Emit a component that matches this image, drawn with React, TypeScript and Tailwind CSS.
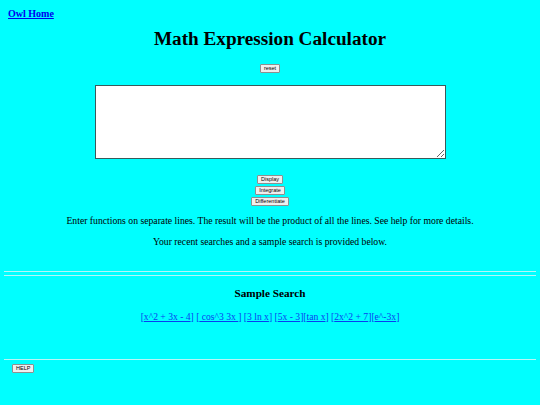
const links = ["x^2 + 3x - 4", " cos^3 3x ", "3 ln x", "5x - 3", "tan x", "2x^2 + 7", "e^-3x"];
const seps = [" ", " ", " ", "", " ", "", ""];

function SmallButton({ label }: { label: string }) {
  return (
    <button className="h-[9px] px-[3px] bg-[#efefef] border border-[#8f8f8f] rounded-[1px] text-[5.5px] leading-none text-black font-['Liberation_Sans',sans-serif]">
      {label}
    </button>
  );
}

export default function App() {
  return (
    <div className="min-h-[405px] w-full bg-[#00ffff] font-['Liberation_Serif',serif] text-black px-[4px]">
      <div className="pt-[8px] pl-[4px] h-[20px] text-[10px] leading-[12px]">
        <a href="#" className="font-bold text-[#0000ee] underline">Owl Home</a>
      </div>
      <h1 className="mt-[7px] text-center text-[19.2px] leading-[24px] font-bold">Math Expression Calculator</h1>
      <div className="mt-[13px] flex justify-center">
        <SmallButton label="reset" />
      </div>
      <div className="mt-[12px] flex justify-center">
        <textarea className="w-[351px] h-[74px] bg-white border border-[#3a5a5a] outline-none resize-y" />
      </div>
      <div className="mt-[16px] flex flex-col items-center gap-[2px]">
        <SmallButton label="Display" />
        <SmallButton label="Integrate" />
        <SmallButton label="Differentiate" />
      </div>
      <p className="mt-[8px] text-center text-[9.7px] leading-[13px]">
        Enter functions on separate lines. The result will be the product of all the lines. See help for more details.
      </p>
      <p className="mt-[8px] text-center text-[9.7px] leading-[13px]">
        Your recent searches and a sample search is provided below.
      </p>
      <div className="mt-[23px] flex flex-col gap-[3px]">
        <div className="h-px bg-[#b6f7f7]" />
        <div className="h-px bg-[#b6f7f7]" />
      </div>
      <h3 className="mt-[10px] text-center text-[11.2px] leading-[14px] font-bold">Sample Search</h3>
      <div className="mt-[10px] text-center text-[9.6px] leading-[13px] text-[#0a3ff0]">
        {links.map((l, i) => (
          <span key={i}>
            [<a href="#" className="underline">{l}</a>]{seps[i]}
          </span>
        ))}
      </div>
      <div className="mt-[36px] h-px bg-[#b6f7f7]" />
      <div className="mt-[4px] pl-[8px] flex">
        <SmallButton label="HELP" />
      </div>
    </div>
  );
}
